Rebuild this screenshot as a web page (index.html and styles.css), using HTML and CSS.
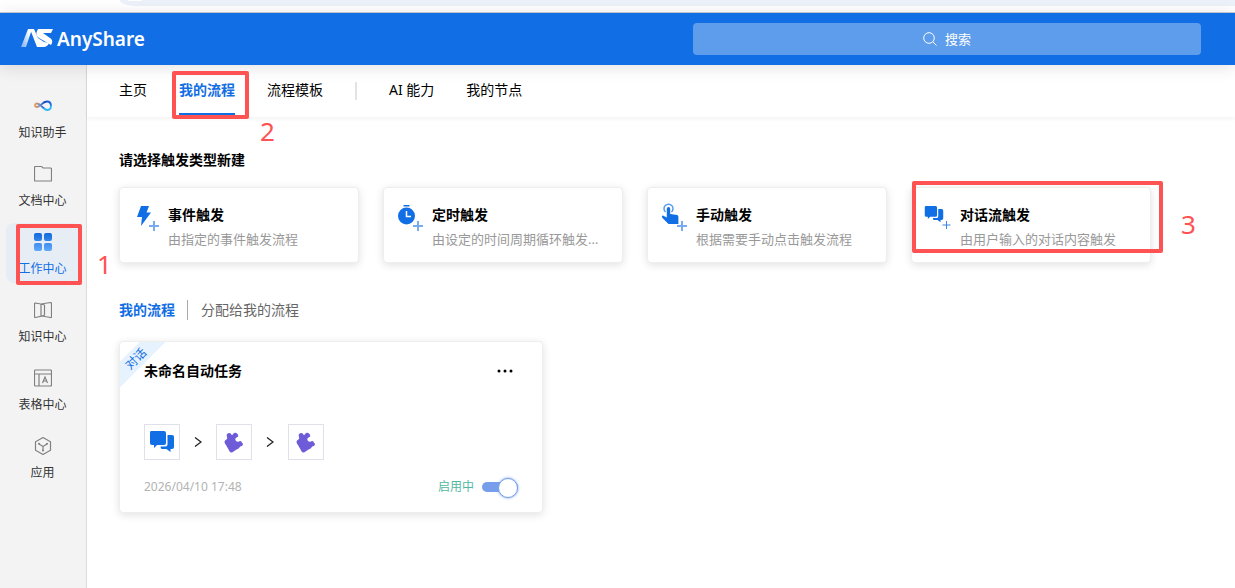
FILE: index.html
```html
<!DOCTYPE html>
<html lang="zh-CN">
<head>
<meta charset="utf-8">
<title>AnyShare</title>
<link rel="stylesheet" href="styles.css">
</head>
<body>
<svg class="defs" aria-hidden="true">
  <symbol id="chat" viewBox="0 0 26 24">
    <path d="M2 1h13q2 0 2 2v10q0 2-2 2H8l-3 3v-3H3q-2 0-2-2V3q0-2 1-2z"/>
    <path d="M18.500 5H23q2 0 2 2v10q0 2-2 2h-1.500v3l-4-3H13q-1.500 0-1.500-2.500h5q2 0 2-2z"/>
  </symbol>
  <symbol id="puzzle" viewBox="0 0 20 21">
    <path d="M.5 9.500Q1 8 2.700 7.300Q3.600 6.500 3 5Q2 2 4.300 1.200Q6.500.8 7.300 2.500Q8.200 3.600 9 2.200Q9.800.6 11.500.8Q13.500 1.200 14.200 3.200Q14.800 4.800 13 5.200Q11 5.800 11.300 7.800Q12 10.200 14.500 9.800Q15.600 8.500 17.200 9.200Q17.700 11 19 11.800Q19.300 13.800 17.300 14.200Q15.800 14.300 15.500 15.500Q14.500 17 12.500 17.500L8 20.500Q6.500 21 5.500 19.300L2 13Q.5 11.500.5 9.500z"/>
  </symbol>
</svg>

<div class="browser-strip"><div class="address"><span></span></div></div>

<header class="topbar">
  <a class="brand" href="#">
    <svg width="34" height="20" viewBox="0 0 34 20" aria-hidden="true">
      <defs><linearGradient id="fade" x1="1" y1="0" x2="0" y2="1"><stop offset=".2" stop-color="#fff"/><stop offset="1" stop-color="#fff" stop-opacity=".45"/></linearGradient></defs>
      <path fill="url(#fade)" d="M8 0h4L6 18H1z"/>
      <path fill="#fff" d="M10 0h4l4 9 6 4 5 1-1 2q-2 2-4 2h-7z"/>
      <path fill="#fff" d="M18 0h15l-2 4h-8l7 5q3 2 2 5l-1 2-12-7q-4-3-2-7z"/>
    </svg>
    <span>AnyShare</span>
  </a>
  <button class="search" type="button">
    <svg width="14" height="14" viewBox="0 0 14 14" aria-hidden="true"><circle cx="6" cy="6" r="5.300"/><path d="M10 10l3.500 3.500"/></svg>
    <span>搜索</span>
  </button>
</header>

<div class="shell">
  <nav class="sidebar">
    <a class="side-item" href="#">
      <svg width="18" height="18" viewBox="0 0 18 18" fill="none" stroke-width="1.800" aria-hidden="true">
        <defs><linearGradient id="loop"><stop offset="0" stop-color="#f39a4d"/><stop offset=".3" stop-color="#7191cc"/><stop offset=".6" stop-color="#1746c8"/><stop offset="1" stop-color="#1c6fe0"/></linearGradient></defs>
        <path stroke="url(#loop)" d="M10 11.500C7 9 5.500 6.500 3 6.500Q1 6.500 1 8.500Q1 10 3 10C6.500 10 8 4.500 13 4.500Q17 4.500 17 9"/>
        <path stroke="#29b6f6" d="M17 8.500Q17 13 13.500 13Q11.500 13 9.500 11"/>
      </svg>
      <span>知识助手</span>
    </a>
    <a class="side-item" href="#">
      <svg class="line" width="18" height="18" viewBox="0 0 18 18" aria-hidden="true"><path d="M.5 15.500v-13q0-1 1-1h5.500q1 0 1.500 1l.5.500h7.500q1 0 1 1v11.500q0 .500-.500.500H1.500q-1 0-1-.500z"/></svg>
      <span>文档中心</span>
    </a>
    <a class="side-item active" href="#">
      <svg width="18" height="18" viewBox="0 0 18 18" aria-hidden="true">
        <defs><linearGradient id="tiles" gradientUnits="userSpaceOnUse" x1="0" y1="0" x2="0" y2="18"><stop offset="0" stop-color="#1269dd"/><stop offset="1" stop-color="#62aafa"/></linearGradient></defs>
        <g fill="url(#tiles)"><rect width="8" height="8" rx="2"/><rect x="10" width="8" height="8" rx="2"/><rect y="10" width="8" height="8" rx="2"/><rect x="10" y="10" width="8" height="8" rx="2"/></g>
      </svg>
      <span>工作中心</span>
      <span class="callout callout-1"><b>1</b></span>
    </a>
    <a class="side-item" href="#">
      <svg class="line" width="18" height="18" viewBox="0 0 18 18" aria-hidden="true"><path d="M.5 3q0-1 1-1L9.500 3.500q1 0 1 1v9q0 1-1 1.200L1.500 16.500q-1 0-1-.500zM7 3l9.500-1.500q1 0 1 1V16q0 .700-1 .500L8 15q-1 0-1-1z"/></svg>
      <span>知识中心</span>
    </a>
    <a class="side-item" href="#">
      <svg class="line" width="18" height="18" viewBox="0 0 18 18" aria-hidden="true"><rect x=".5" y="1" width="17" height="16" rx="1"/><path d="M.5 5h17M5 5v12M8.500 14l2.500-6 2.500 6M9.500 12h3"/></svg>
      <span>表格中心</span>
    </a>
    <a class="side-item" href="#">
      <svg class="line" width="18" height="18" viewBox="0 0 18 18" aria-hidden="true"><path d="M9 .5l7.500 4.300v8.400L9 17.500l-7.500-4.300V4.800zM9 14V9.500L5 7M9 9.500L13 7"/><g class="dots"><circle cx="5" cy="6.800" r="1"/><circle cx="13" cy="6.800" r="1"/><circle cx="9" cy="13.500" r="1"/></g></svg>
      <span>应用</span>
    </a>
  </nav>

  <main class="main">
    <nav class="tabs">
      <a class="tab" href="#">主页</a>
      <a class="tab active" href="#">我的流程<span class="callout callout-2"><b>2</b></span></a>
      <a class="tab" href="#">流程模板</a>
      <span class="divider"></span>
      <a class="tab" href="#">AI 能力</a>
      <a class="tab" href="#">我的节点</a>
    </nav>

    <div class="content">
      <h2>请选择触发类型新建</h2>
      <div class="triggers">
        <button class="trigger" type="button">
          <svg width="26" height="27" viewBox="0 0 26 27" aria-hidden="true"><path class="fill" d="M7 2h8l-2.500 6.500H17L7 22l1-9H3z"/><path class="plus" d="M20 17v10M15 22h10"/></svg>
          <span class="trigger-text"><strong>事件触发</strong><span class="desc">由指定的事件触发流程</span></span>
        </button>
        <button class="trigger" type="button">
          <svg width="26" height="27" viewBox="0 0 26 27" aria-hidden="true"><circle class="fill" cx="8.500" cy="12" r="8.500"/><path class="fill" d="M5.500 1h6v1.500h-6z"/><path d="M8.500 7v5.500H13" fill="none" stroke="#fff" stroke-width="1.500"/><path class="plus" d="M20 17v10M15 22h10"/></svg>
          <span class="trigger-text"><strong>定时触发</strong><span class="desc">由设定的时间周期循环触发...</span></span>
        </button>
        <button class="trigger" type="button">
          <svg width="26" height="27" viewBox="0 0 26 27" aria-hidden="true"><path d="M3.500 8a4.500 4.500 0 1 1 6 0" fill="none" stroke="#5a9bee" stroke-width="1.500"/><path class="fill" d="M4.800 4.500q0-1.500 1.700-1.500t1.700 1.500V10l7 1q1.200.300 1.200 2v7H6.500L.5 14q-1.500-2 .5-2.500l3.800 2z"/><path class="plus" d="M20 17v10M15 22h10"/></svg>
          <span class="trigger-text"><strong>手动触发</strong><span class="desc">根据需要手动点击触发流程</span></span>
        </button>
        <button class="trigger" type="button">
          <svg width="26" height="27" viewBox="0 0 26 27" aria-hidden="true"><use href="#chat" class="fill" x="-2" y="1" width="20" height="19"/><path class="plus thin" d="M20.500 17v8M16.500 21h8"/></svg>
          <span class="trigger-text"><strong>对话流触发</strong><span class="desc">由用户输入的对话内容触发</span></span>
          <span class="callout callout-3"><b>3</b></span>
        </button>
      </div>

      <nav class="lists">
        <a class="active" href="#">我的流程</a>
        <a href="#">分配给我的流程</a>
      </nav>

      <div class="flows">
        <article class="flow">
          <span class="ribbon"><span>对话</span></span>
          <div class="flow-head">
            <h3>未命名自动任务</h3>
            <button class="more" type="button" aria-label="更多"><svg width="16" height="4" viewBox="0 0 16 4" aria-hidden="true"><circle cx="2" cy="2" r="1.500"/><circle cx="8" cy="2" r="1.500"/><circle cx="14" cy="2" r="1.500"/></svg></button>
          </div>
          <div class="steps">
            <span class="step"><svg class="fill" width="26" height="24" aria-hidden="true"><use href="#chat"/></svg></span>
            <svg class="arrow" width="8" height="10" viewBox="0 0 8 10" aria-hidden="true"><path d="M1 .5L7 5 1 9.500"/></svg>
            <span class="step"><svg class="purple" width="20" height="21" aria-hidden="true"><use href="#puzzle"/></svg></span>
            <svg class="arrow" width="8" height="10" viewBox="0 0 8 10" aria-hidden="true"><path d="M1 .5L7 5 1 9.500"/></svg>
            <span class="step"><svg class="purple" width="20" height="21" aria-hidden="true"><use href="#puzzle"/></svg></span>
          </div>
          <div class="flow-foot">
            <time>2026/04/10 17:48</time>
            <label class="status">启用中<input class="switch" type="checkbox" role="switch" checked></label>
          </div>
        </article>
      </div>
    </div>
  </main>
</div>
</body>
</html>
```

FILE: styles.css
```css
* { box-sizing: border-box; }
body {
  margin: 0;
  min-height: 100vh;
  display: flex;
  flex-direction: column;
  background: #fff;
  color: #000;
  font: 14px/22px "Noto Sans", "Noto Sans CJK SC", sans-serif;
}
a { color: inherit; text-decoration: none; }
button { font: inherit; color: inherit; border: 0; background: none; padding: 0; cursor: pointer; }
h2, h3 { margin: 0; font-size: 14px; line-height: 22px; font-weight: 700; }
.defs { position: absolute; width: 0; height: 0; }
.fill { fill: #116ee4; }

.browser-strip { height: 13px; padding-left: 120px; border-bottom: 1px solid #c9ccd1; }
.address { height: 6px; padding-left: 8px; background: #edf1fa; border-bottom-left-radius: 16px 6px; }
.address span { display: block; width: 14px; height: 1px; background: #fff; }

.topbar {
  position: relative;
  z-index: 1;
  height: 52px;
  padding: 0 34px 0 20px;
  display: flex;
  align-items: center;
  justify-content: space-between;
  background: #116ee4;
  box-shadow: 0 2px 16px rgba(0, 0, 0, .12);
}
.brand { display: flex; align-items: center; gap: 3px; color: #fff; font-size: 19px; font-weight: 600; line-height: 24px; }
.search {
  width: 43%;
  height: 32px;
  display: flex;
  align-items: center;
  justify-content: center;
  gap: 8px;
  border-radius: 4px;
  background: #5e9dec;
  color: #fff;
  font-size: 13px;
}
.search svg { fill: none; stroke: #fff; stroke-width: 1; }

.shell { flex: 1; display: flex; }
.sidebar {
  flex: none;
  width: 87px;
  padding: 22px 7px 22px 6px;
  display: flex;
  flex-direction: column;
  gap: 8px;
  background: #f3f3f3;
  border-right: 1px solid #dcdcdc;
}
.side-item {
  position: relative;
  height: 60px;
  padding-top: 10px;
  display: flex;
  flex-direction: column;
  align-items: center;
  gap: 9px;
  border-radius: 8px;
  color: #333;
  font-size: 12px;
  line-height: 18px;
}
.side-item.active { background: #e7edf5; color: #116ee4; }
.line { fill: none; stroke: #808080; stroke-width: 1.2; }
.dots { fill: #808080; stroke: none; }

.main { flex: 1; min-width: 0; }
.tabs { height: 52px; padding: 0 32px; display: flex; align-items: stretch; gap: 32px; box-shadow: 0 2px 4px rgba(0, 0, 0, .05); }
.tab { position: relative; height: 50px; line-height: 50px; white-space: nowrap; }
.tab.active { color: #116ee4; font-weight: 700; border-bottom: 2px solid #116ee4; }
.divider { width: 2px; height: 18px; margin-top: 17px; background: #e3e3e3; }

.content { padding: 32px; }
.triggers { display: grid; grid-template-columns: repeat(auto-fill, 240px); gap: 24px; margin-top: 16px; }
.trigger, .flow {
  position: relative;
  border: 1px solid #eee;
  border-radius: 4px;
  background: #fff;
  box-shadow: 0 2px 9px rgba(0, 0, 0, .12);
}
.trigger { height: 76px; padding: 4px 12px 0; display: grid; grid-template-columns: 36px 1fr; align-items: center; text-align: left; }
.trigger > svg { align-self: start; margin: 12px 0 0 2px; overflow: visible; }
.trigger-text { min-width: 0; display: flex; flex-direction: column; gap: 2px; }
.desc { color: #999; font-size: 13px; overflow: hidden; white-space: nowrap; text-overflow: ellipsis; }
.plus { fill: none; stroke: #79abf0; stroke-width: 2; }
.plus.thin { stroke: #3a85e8; stroke-width: 1; }

.lists { display: flex; align-items: center; margin-top: 37px; color: #666; }
.lists a { line-height: 20px; }
.lists .active { padding-right: 12px; margin-right: 13px; border-right: 1px solid #aaa; color: #116ee4; font-weight: 700; }
.flows { display: grid; grid-template-columns: repeat(auto-fill, minmax(0, 424px)); gap: 24px; margin-top: 21px; }
.flow { padding: 18px 24px 14px; }
.flow-head { display: flex; align-items: center; justify-content: space-between; }
.more { height: 22px; padding: 0 5px; display: flex; align-items: center; }
.ribbon {
  position: absolute;
  top: 0;
  left: 0;
  width: 45px;
  height: 45px;
  background: linear-gradient(135deg, transparent 14px, #e6f3ff 14px, #e6f3ff 32px, transparent 32px);
  color: #116ee4;
  font-size: 12px;
  line-height: 16px;
}
.ribbon span { position: absolute; top: 9px; left: 4px; transform: rotate(-45deg); }
.steps { display: flex; align-items: center; gap: 14px; margin-top: 42px; }
.step { width: 36px; height: 36px; display: flex; align-items: center; justify-content: center; border: 1px solid #e0e0ea; }
.purple { fill: #6e5bd8; }
.arrow { fill: none; stroke: #222; stroke-width: 1.3; }
.flow-foot { display: flex; align-items: center; justify-content: space-between; margin-top: 16px; color: #b3b3b3; font-size: 12px; }
.status { display: flex; align-items: center; gap: 8px; color: #52b8a0; }
.switch { appearance: none; position: relative; width: 36px; height: 18px; margin: 0; }
.switch::before { content: ""; position: absolute; inset: 4px 0; border-radius: 5px; background: #779eeb; }
.switch::after {
  content: "";
  position: absolute;
  top: 0;
  left: 0;
  width: 18px;
  height: 18px;
  border: 1px solid #779eeb;
  border-radius: 50%;
  background: #fff;
  box-shadow: 0 0 3px #779eeb;
}
.switch:checked::after { left: auto; right: 0; }

.callout { position: absolute; z-index: 2; border: 4px solid #ff5252; border-radius: 2px; pointer-events: none; }
.callout b { position: absolute; color: #ff5252; font-size: 26px; font-weight: 400; line-height: 26px; }
.callout-1 { top: 1px; left: 10px; width: 66px; height: 61px; }
.callout-1 b { top: 23px; left: 77px; }
.callout-2 { top: 6px; left: -7px; width: 77px; height: 48px; }
.callout-2 b { top: 43px; left: 84px; }
.callout-3 { top: -7px; left: 0; width: 251px; height: 72px; }
.callout-3 b { top: 26px; left: 265px; }
```
